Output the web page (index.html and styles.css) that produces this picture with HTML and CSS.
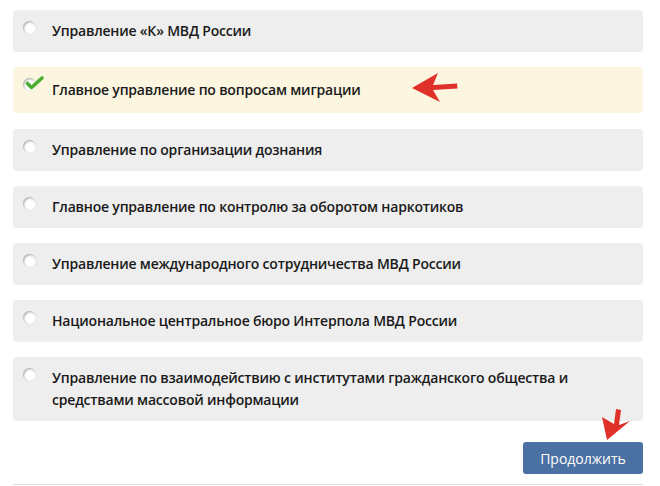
FILE: index.html
```html
<!DOCTYPE html>
<html lang="ru">
<head>
    <meta charset="UTF-8">
    <meta name="viewport" content="width=device-width, initial-scale=1.0">
    <title>Выбор подразделения</title>
    <link rel="stylesheet" href="styles.css">
</head>
<body>
    <main class="page">
        <ul class="options">
            <li class="option">
                <span class="radio"></span>
                <span class="option-text">Управление «К» МВД России</span>
            </li>
            <li class="option option-checked">
                <span class="radio radio-checked">
                    <svg width="22" height="18" viewBox="0 0 22 18">
                        <path d="M4.5 8.5 L8.5 12.5 L19 3" fill="none" stroke="#4cae30" stroke-width="3.6" stroke-linecap="round" stroke-linejoin="round"/>
                    </svg>
                </span>
                <span class="option-text">Главное управление по вопросам миграции</span>
            </li>
            <li class="option">
                <span class="radio"></span>
                <span class="option-text">Управление по организации дознания</span>
            </li>
            <li class="option">
                <span class="radio"></span>
                <span class="option-text">Главное управление по контролю за оборотом наркотиков</span>
            </li>
            <li class="option">
                <span class="radio"></span>
                <span class="option-text">Управление международного сотрудничества МВД России</span>
            </li>
            <li class="option">
                <span class="radio"></span>
                <span class="option-text">Национальное центральное бюро Интерпола МВД России</span>
            </li>
            <li class="option">
                <span class="radio"></span>
                <span class="option-text">Управление по взаимодействию с институтами гражданского общества и средствами массовой информации</span>
            </li>
        </ul>
        <div class="actions">
            <button class="btn-next" type="button">Продолжить</button>
        </div>

        <!-- red pointer arrows drawn over the form -->
        <svg class="pointers" width="660" height="486" viewBox="0 0 660 486">
            <path d="M412 88 L438 73 L433 85 L457 83.5 L457.5 88.5 L433 90 L440 102 Z" fill="#e0302a"/>
            <path d="M607 440 L602 417 L614 424 L616 409 L621 410 L619 425 L630 421 Z" fill="#e0302a"/>
        </svg>
    </main>
</body>
</html>
```

FILE: styles.css
```css
body {
    margin: 0;
    background-color: #fff;
    font-family: "Open Sans", "Noto Sans", Arial, sans-serif;
    color: #1a1a1a;
}
.page {
    position: relative;
    width: 660px;
    height: 486px;
    box-sizing: border-box;
    padding: 10px 17px 0 13px;
}
.options {
    list-style: none;
    margin: 0;
    padding: 0;
    display: flex;
    flex-direction: column;
    gap: 15px;
}
.option {
    display: flex;
    align-items: flex-start;
    padding: 10px 12px 10px 10px;
    background-color: #eeeeee;
    border-radius: 4px;
}
.option-checked {
    padding: 12px 12px 12px 10px;
    margin-bottom: 1px;
    background-color: #fcf6e1;
}
.radio {
    flex: none;
    position: relative;
    width: 13px;
    height: 13px;
    margin: 1px 16px 0 0;
    border-radius: 50%;
    background: radial-gradient(circle at 50% 65%, #ffffff 40%, #efefef 100%);
    box-shadow: inset 1px 1px 2px rgba(0, 0, 0, 0.3), 0 0 1px rgba(0, 0, 0, 0.15);
}
.radio-checked {
    margin-top: -1px;
}
.radio-checked svg {
    position: absolute;
    left: 0;
    top: -3px;
}
.option-text {
    font-size: 14px;
    font-weight: 600;
    line-height: 22px;
    letter-spacing: -0.2px;
}
.actions {
    display: flex;
    justify-content: flex-end;
    margin-top: 21px;
    padding-bottom: 10px;
    border-bottom: 1px solid #dedede;
}
.btn-next {
    width: 120px;
    height: 32px;
    border: none;
    border-radius: 3px;
    background-color: #4b70a3;
    color: #fff;
    font-family: "Open Sans", "Noto Sans", Arial, sans-serif;
    font-size: 14px;
    cursor: pointer;
}
.pointers {
    position: absolute;
    top: 0;
    left: 0;
    pointer-events: none;
}
```
